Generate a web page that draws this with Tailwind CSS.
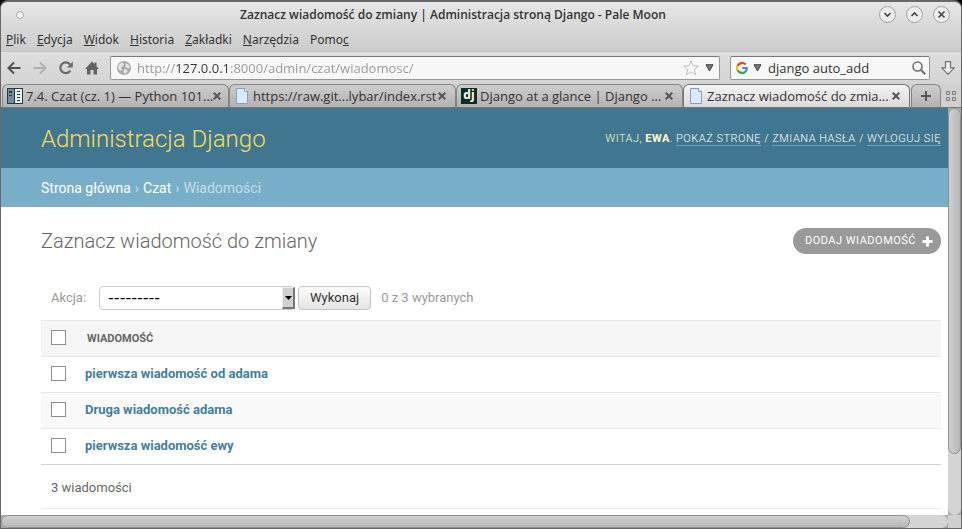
<!DOCTYPE html>
<html lang="pl">
<head>
<meta charset="utf-8">
<title>Zaznacz wiadomość do zmiany | Administracja stroną Django</title>
<script src="https://cdn.jsdelivr.net/npm/@tailwindcss/browser@4"></script>
</head>
<body class="bg-black h-screen overflow-hidden font-['Noto_Sans','Open_Sans',sans-serif] text-[12px] leading-4 text-[#333]">
<div class="h-full flex flex-col rounded-t-lg border border-t-2 border-[#686868] bg-[#d6d6d6] overflow-hidden">

  <div class="bg-linear-to-b from-[#e6e6e6] to-[#cbcbcb] shrink-0">
    <header class="h-[25px] grid grid-cols-[100px_1fr_100px] items-center">
      <span class="ml-[15px] size-2 rounded-full border border-[#aaa] bg-[#f4f4f4]"></span>
      <h1 class="text-center font-semibold whitespace-nowrap font-['Open_Sans','Noto_Sans',sans-serif] pr-14">Zaznacz wiadomość do zmiany | Administracja stroną Django - Pale Moon</h1>
      <div class="flex justify-end gap-[10px] pr-[11px]">
        <button aria-label="Minimalizuj" class="size-[17px] rounded-full border border-[#a0a0a0] bg-[#ededed] flex items-center justify-center"><svg class="size-[9px]" viewBox="0 0 9 9" fill="none" stroke="#444" stroke-width="1.6"><path d="M1.5 3l3 3 3-3"/></svg></button>
        <button aria-label="Maksymalizuj" class="size-[17px] rounded-full border border-[#a0a0a0] bg-[#ededed] flex items-center justify-center"><svg class="size-[9px]" viewBox="0 0 9 9" fill="none" stroke="#444" stroke-width="1.6"><path d="M1.5 6l3-3 3 3"/></svg></button>
        <button aria-label="Zamknij" class="size-[17px] rounded-full border border-[#a0a0a0] bg-[#ededed] flex items-center justify-center"><svg class="size-[9px]" viewBox="0 0 9 9" fill="none" stroke="#444" stroke-width="1.6"><path d="M1.5 1.5l6 6M7.5 1.5l-6 6"/></svg></button>
      </div>
    </header>
    <nav class="h-[25px] flex items-center gap-[11px] pl-[5px] pt-px border-b border-[#c4c4c4]">
      <button><u>P</u>lik</button>
      <button><u>E</u>dycja</button>
      <button><u>W</u>idok</button>
      <button><u>H</u>istoria</button>
      <button><u>Z</u>akładki</button>
      <button><u>N</u>arzędzia</button>
      <button>Pomo<u>c</u></button>
    </nav>
  </div>

  <div class="h-8 shrink-0 flex items-center bg-linear-to-b from-[#dedede] to-[#d4d4d4] pl-[6px] pr-[6px]">
    <div class="flex items-center gap-3 mr-[11px]">
      <button aria-label="Wstecz"><svg class="size-[14px]" viewBox="0 0 14 14" fill="none" stroke="#505050" stroke-width="2"><path d="M1.5 7h12M7 1.5L1.5 7 7 12.500"/></svg></button>
      <button aria-label="Dalej"><svg class="size-[14px]" viewBox="0 0 14 14" fill="none" stroke="#b0b0b0" stroke-width="2"><path d="M.5 7h12M7 1.500L12.500 7 7 12.500"/></svg></button>
      <button aria-label="Odśwież"><svg class="size-[14px]" viewBox="0 0 14 14"><path d="M11.300 9.700A5.400 5.400 0 1 1 11 3.400" fill="none" stroke="#6a6a6a" stroke-width="2.200"/><path d="M13.800.5v6H7.800z" fill="#6a6a6a"/></svg></button>
      <button aria-label="Strona startowa"><svg class="size-[14px]" viewBox="0 0 14 14" fill="#626262"><path d="M7 .5L0 8h2v5.500h3.500V9h3v4.500H12V8h2l-2.500-2.700V1.500h-2v1.700z"/></svg></button>
    </div>
    <div class="h-6 flex-1 flex items-center rounded-xs border border-[#979797] border-t-[#777] bg-[#f7f7f7] pl-[6px] pr-[5px]">
      <svg class="size-[14px] shrink-0" viewBox="0 0 14 14"><circle cx="7" cy="7" r="7" fill="#a9a9a9"/><path d="M2 3.500l3-2 2 1.500-1 2-2 1.500L5 9l-2 1-2-3zM8.500 2l3 1.500 1.500 3-2 1-2.500-1.500zM7 8l3 .5.5 2L8 13l-1.500-2z" fill="#e6e6e6"/></svg>
      <input aria-label="Adres" class="flex-1 min-w-0 ml-[6px] h-5 outline-none font-['Open_Sans','Noto_Sans',sans-serif] text-[13px] text-transparent bg-clip-text bg-[linear-gradient(to_right,#979797_38px,#333_38px,#333_93px,#979797_93px)]" value="http://127.0.0.1:8000/admin/czat/wiadomosc/">
      <button aria-label="Dodaj zakładkę" class="mr-[6px]"><svg class="size-4" viewBox="0 0 16 16" fill="#fff" stroke="#bcbcbc"><path d="M8 .8l2 5 5.300.3-4.100 3.400 1.400 5.200L8 11.800l-4.600 2.900 1.400-5.200L.7 6.100 6 5.800z"/></svg></button>
      <button aria-label="Historia adresów"><svg class="w-[9px] h-2" viewBox="0 0 9 8" fill="#777" stroke="#444"><path d="M1 .7h7L4.500 7z"/></svg></button>
    </div>
    <div class="ml-[10px] w-[200px] h-6 flex items-center rounded-xs border border-[#979797] border-t-[#777] bg-[#f7f7f7] pl-[5px] pr-[3px]">
      <svg class="size-3 shrink-0" viewBox="0 0 12 12" fill="none" stroke-width="2.200"><path d="M9.700 2.600A5 5 0 0 0 1.600 3.700" stroke="#ea4335"/><path d="M1.600 3.600a5 5 0 0 0 0 4.800" stroke="#fbbc05"/><path d="M1.600 8.300a5 5 0 0 0 7.600 1.500" stroke="#34a853"/><path d="M9 9.900A4.900 4.900 0 0 0 10.800 6H6.200" stroke="#4285f4"/></svg>
      <button aria-label="Wyszukiwarka" class="ml-[5px]"><svg class="w-[9px] h-2" viewBox="0 0 9 8" fill="#777" stroke="#444"><path d="M1 .7h7L4.500 7z"/></svg></button>
      <input aria-label="Szukaj" class="flex-1 min-w-0 ml-[6px] font-['Open_Sans','Noto_Sans',sans-serif] text-[13px] outline-none" value="django auto_add">
      <button aria-label="Szukaj teraz"><svg class="size-[14px]" viewBox="0 0 14 14" fill="none" stroke="#707070"><circle cx="5.500" cy="5.500" r="4.500" stroke-width="1.600"/><path d="M9 9l4.200 4.200" stroke-width="2.200"/></svg></button>
    </div>
    <button aria-label="Pobrane" class="ml-[11px]"><svg class="size-[14px]" viewBox="0 0 14 14" fill="#eee" stroke="#707070" stroke-width="1.200"><path d="M4.500.6h5v6.200h3.700L7 13.300.8 6.800h3.700z"/></svg></button>
  </div>

  <div class="h-[24px] shrink-0 flex items-end bg-[#d0d0d0] pl-px pr-[5px] font-['Open_Sans','Noto_Sans',sans-serif] text-[13px] border-b border-[#777]">
    <div class="flex-1 min-w-0 h-[23px] flex items-center rounded-t-md border border-b-0 border-[#858585] bg-linear-to-b from-[#cdcdcd] to-[#b2b2b2] pl-1 pr-[9px]">
      <svg class="size-4 shrink-0" viewBox="0 0 16 16"><path fill="#263c48" d="M0 0h16v16H0z"/><path fill="#718d9d" d="M1 1h6v14H1z"/><path fill="#e8edf0" d="M8 1h7v14H8z"/><path fill="#263c48" d="M2 3h3v2H2zM2 7h3v1H2zM10 3h3v1h-3zM10 6h3v1h-3zM10 9h3v1h-3zM10 12h3v1h-3z"/></svg>
      <a href="#" class="flex-1 ml-[3px] whitespace-nowrap">7.4. Czat (cz. 1) — Python 101...</a>
      <button aria-label="Zamknij kartę"><svg class="size-2" viewBox="0 0 8 8" stroke="#555" stroke-width="2"><path d="M.7.7l6.600 6.600M7.300.7L.7 7.300"/></svg></button>
    </div>
    <div class="flex-1 min-w-0 h-[23px] flex items-center rounded-t-md border border-b-0 border-[#858585] bg-linear-to-b from-[#cdcdcd] to-[#b2b2b2] pl-1 pr-[9px]">
      <svg class="size-4 shrink-0" viewBox="0 0 16 16"><path d="M2.500.5h8l3 3v12h-11z" fill="#dcebfb" stroke="#7fa0cc"/><path d="M10.500.5v3h3" fill="#fff" stroke="#7fa0cc"/></svg>
      <a href="#" class="flex-1 ml-[3px] whitespace-nowrap">https://raw.git...lybar/index.rst</a>
      <button aria-label="Zamknij kartę"><svg class="size-2" viewBox="0 0 8 8" stroke="#555" stroke-width="2"><path d="M.7.7l6.600 6.600M7.300.7L.7 7.300"/></svg></button>
    </div>
    <div class="flex-1 min-w-0 h-[23px] flex items-center rounded-t-md border border-b-0 border-[#858585] bg-linear-to-b from-[#cdcdcd] to-[#b2b2b2] pl-1 pr-[9px]">
      <span class="size-4 shrink-0 bg-[#0c2e20] text-white font-bold text-[12px] leading-[13px] text-center">dj</span>
      <a href="#" class="flex-1 ml-[3px] whitespace-nowrap">Django at a glance | Django ...</a>
      <button aria-label="Zamknij kartę"><svg class="size-2" viewBox="0 0 8 8" stroke="#555" stroke-width="2"><path d="M.7.7l6.600 6.600M7.300.7L.7 7.300"/></svg></button>
    </div>
    <div class="flex-1 min-w-0 h-[23px] flex items-center rounded-t-md border border-b-0 border-[#777] bg-linear-to-b from-[#f4f4f4] to-[#d9d9d9] pl-1 pr-[9px]">
      <svg class="size-4 shrink-0" viewBox="0 0 16 16"><path d="M2.500.5h8l3 3v12h-11z" fill="#dcebfb" stroke="#7fa0cc"/><path d="M10.500.5v3h3" fill="#fff" stroke="#7fa0cc"/></svg>
      <a href="#" class="flex-1 ml-[3px] whitespace-nowrap">Zaznacz wiadomość do zmia...</a>
      <button aria-label="Zamknij kartę"><svg class="size-2" viewBox="0 0 8 8" stroke="#555" stroke-width="2"><path d="M.7.7l6.600 6.600M7.300.7L.7 7.300"/></svg></button>
    </div>
    <button aria-label="Nowa karta" class="ml-px w-[30px] h-[23px] flex items-center justify-center rounded-t-md border border-b-0 border-[#858585] bg-linear-to-b from-[#cdcdcd] to-[#b2b2b2]"><svg class="size-[10px]" viewBox="0 0 10 10" stroke="#555" stroke-width="2"><path d="M5 0v10M0 5h10"/></svg></button>
    <button aria-label="Lista kart" class="ml-[5px] h-[23px]"><svg class="size-[10px]" viewBox="0 0 10 10" fill="none" stroke="#777"><path d="M.5.5h3v3h-3zM6.500.5h3v3h-3zM.5 6.500h3v3h-3zM6.500 6.500h3v3h-3z"/></svg></button>
  </div>

  <div class="flex-1 min-h-0 flex">
    <main class="flex-1 min-w-0 overflow-hidden bg-white font-[Roboto,sans-serif] text-[13px] text-[#666]">
      <div class="h-[60px] flex items-center justify-between bg-[#417690] pl-10 pr-[7px] pt-[2px] text-[#ffc]">
        <h2 class="text-[24px] leading-7 font-light text-[#f5dd5d]">Administracja Django</h2>
        <div class="text-[11px] font-light tracking-[0.5px] uppercase whitespace-nowrap">Witaj, <strong class="font-bold">Ewa</strong>. <a href="#" class="text-white border-b border-white/30">Pokaż stronę</a> / <a href="#" class="text-white border-b border-white/30">Zmiana hasła</a> / <a href="#" class="text-white border-b border-white/30">Wyloguj się</a></div>
      </div>
      <div class="h-[39px] flex items-center gap-1 bg-[#79aec8] pl-10 text-[14px] text-[#c4dce8]">
        <a href="#" class="text-white">Strona główna</a>›<a href="#" class="text-white">Czat</a>›<span>Wiadomości</span>
      </div>
      <div class="pl-10 pr-[7px] pt-5">
        <div class="flex items-center justify-between mb-[31px]">
          <h3 class="text-[20px] leading-7 font-light">Zaznacz wiadomość do zmiany</h3>
          <a href="#" class="h-[26px] flex items-center gap-[6px] rounded-full bg-[#999] pl-3 pr-2 text-[11px] tracking-[0.5px] uppercase text-white">Dodaj wiadomość<svg class="size-[11px]" viewBox="0 0 11 11" stroke="#fff" stroke-width="3"><path d="M5.500.5v10M.5 5.500h10"/></svg></a>
        </div>
        <form class="h-6 flex items-center pl-[10px] mb-[10px] text-[#999]">
          <label for="action" class="mr-[13px]">Akcja:</label>
          <div class="relative w-[196px] h-6 mr-[3px]">
            <select id="action" class="appearance-none w-full h-6 rounded-sm border border-[#ccc] bg-white pl-2 text-black font-['DejaVu_Sans',sans-serif] text-[16px] leading-5"><option>---------</option></select>
            <span class="absolute right-0 top-px bottom-px w-[13px] flex items-center justify-center border border-t-[#eee] border-l-[#eee] border-r-2 border-b-2 border-r-[#777] border-b-[#777] bg-[#d0d0d0] pointer-events-none"><svg class="w-[7px] h-1" viewBox="0 0 7 4"><path d="M0 0h7L3.500 4z"/></svg></span>
          </div>
          <button type="button" class="h-6 px-[11px] rounded-sm border border-[#c4c4c4] bg-linear-to-b from-[#fcfcfc] to-[#e4e4e4] text-[#333] mr-[10px]">Wykonaj</button>
          <span>0 z 3 wybranych</span>
        </form>
        <table class="w-full border-collapse text-left">
          <thead><tr class="h-9 bg-[#f5f5f5] border-y border-[#e8e8e8]">
            <th class="w-[44px] pl-[10px]"><input type="checkbox" aria-label="Zaznacz wszystkie" class="block appearance-none size-[15px] mb-[2px] border border-[#8e8e8e] bg-white"></th>
            <th class="pl-[2px] pt-px text-[11px] font-bold uppercase">Wiadomość</th></tr></thead>
          <tbody class="font-bold text-[#447e9b]">
            <tr class="h-9 border-b border-[#e8e8e8]"><td class="pl-[10px]"><input type="checkbox" aria-label="pierwsza wiadomość od adama" class="block appearance-none size-[15px] mb-[2px] border border-[#8e8e8e] bg-white"></td><td class="pb-[2px]"><a href="#">pierwsza wiadomość od adama</a></td></tr>
            <tr class="h-9 border-b border-[#e8e8e8] bg-[#f9f9f9]"><td class="pl-[10px]"><input type="checkbox" aria-label="Druga wiadomość adama" class="block appearance-none size-[15px] mb-[2px] border border-[#8e8e8e] bg-white"></td><td class="pb-[2px]"><a href="#">Druga wiadomość adama</a></td></tr>
            <tr class="h-9 border-b border-[#d0d0d0]"><td class="pl-[10px]"><input type="checkbox" aria-label="pierwsza wiadomość ewy" class="block appearance-none size-[15px] mb-[2px] border border-[#8e8e8e] bg-white"></td><td class="pb-[2px]"><a href="#">pierwsza wiadomość ewy</a></td></tr>
          </tbody>
        </table>
        <p class="h-11 flex items-center pl-[10px] pt-[2px] border-b border-[#eaeaea]">3 wiadomości</p>
      </div>
    </main>
    <div class="w-[13px] shrink-0 bg-[#a8a8a8]"><div class="h-full rounded-full bg-[#d4d4d4]"><div class="h-[85%] rounded-full border border-[#909090] bg-linear-to-r from-[#cfcfcf] to-[#b8b8b8]"></div></div></div>
  </div>
  <div class="h-[13px] shrink-0 flex bg-[#a8a8a8]">
    <div class="flex-1 rounded-full bg-[#d4d4d4]"><div class="h-full w-[96%] rounded-full border border-[#909090] bg-linear-to-b from-[#cfcfcf] to-[#b8b8b8]"></div></div>
    <div class="w-[13px] bg-[#cfcfcf]"></div>
  </div>
</div>
</body>
</html>
